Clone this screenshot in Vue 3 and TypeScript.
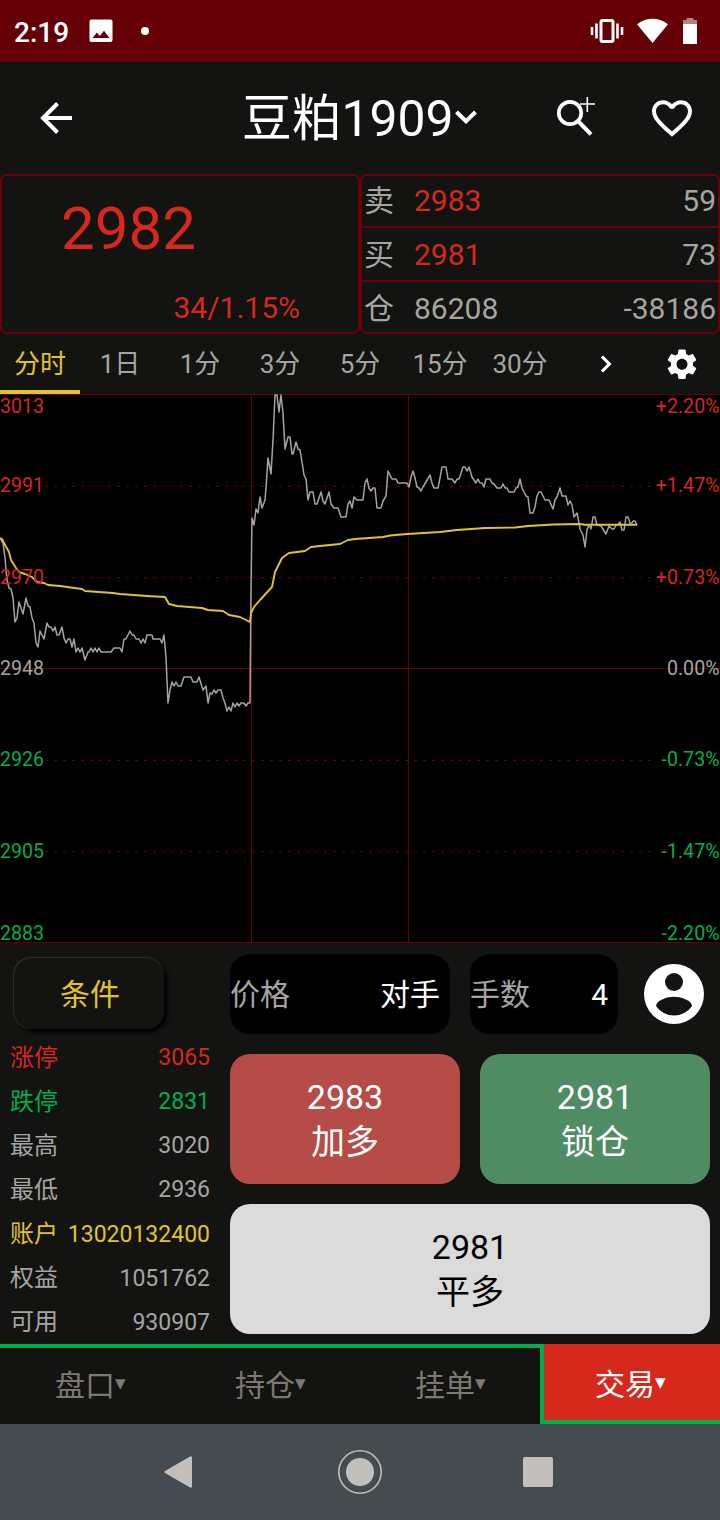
<script setup lang="ts">
type Tone = 'red' | 'green' | 'gray' | 'yellow'

interface QuoteRow { label: string; value: string; amount: string; tone: Tone }
interface InfoRow { label: string; value: string; tone: Tone }
interface AxisRow { y: number; price: string; change: string; tone: Tone }

const quoteRows: QuoteRow[] = [
  { label: '卖', value: '2983', amount: '59', tone: 'red' },
  { label: '买', value: '2981', amount: '73', tone: 'red' },
  { label: '仓', value: '86208', amount: '-38186', tone: 'gray' },
]

const periods: string[] = ['分时', '1日', '1分', '3分', '5分', '15分', '30分']

const infoRows: InfoRow[] = [
  { label: '涨停', value: '3065', tone: 'red' },
  { label: '跌停', value: '2831', tone: 'green' },
  { label: '最高', value: '3020', tone: 'gray' },
  { label: '最低', value: '2936', tone: 'gray' },
  { label: '账户', value: '13020132400', tone: 'yellow' },
  { label: '权益', value: '1051762', tone: 'gray' },
  { label: '可用', value: '930907', tone: 'gray' },
]

const sections: string[] = ['盘口', '持仓', '挂单', '交易']

const axis: AxisRow[] = [
  { y: 413, price: '3013', change: '+2.20%', tone: 'red' },
  { y: 492, price: '2991', change: '+1.47%', tone: 'red' },
  { y: 584, price: '2970', change: '+0.73%', tone: 'red' },
  { y: 675, price: '2948', change: '0.00%', tone: 'gray' },
  { y: 766, price: '2926', change: '-0.73%', tone: 'green' },
  { y: 858, price: '2905', change: '-1.47%', tone: 'green' },
  { y: 940, price: '2883', change: '-2.20%', tone: 'green' },
]

const dashedLines: number[] = [486.5, 577.5, 760.5, 851.5]

const priceLine = `
0,538 3,543 5,558 7,580 9,588 11,589 13,598 15,622 17,618 19,602 23,614 26,598 28,606 30,607 32,618 34,623
36,643 38,647 40,631 44,639 47,623 49,627 51,627 53,631 55,627 57,635 59,635 62,627 64,638 66,643 68,639
70,639 72,647 74,639 76,652 78,648 80,652 82,648 85,660 88,652 89,652 91,648 93,652 95,648 97,652 99,648
101,652 111,652 114,648 120,648 122,652 124,639 126,639 130,631 132,635 134,635 136,639 139,639 141,643
143,639 145,643 147,635 152,635 153,639 160,639 162,643 164,635 166,657 168,703 170,690 172,682 174,686
176,682 178,686 181,686 184,677 191,677 193,682 197,682 199,677 202,687 203,690 206,686 208,703 210,693
212,694 214,690 216,693 218,690 221,690 223,698 225,703 227,711 229,707 231,711 233,703 235,707 237,703
239,706 241,703 244,703 246,706 248,703 250,703 251,590 252,518 254,525 256,509 258,513 260,497 262,508
265,500 266,488 268,458 271,474 273,440 275,395 277,395 279,412 281,395 283,413 285,449 288,437 290,437
292,454 293,454 296,442 298,449 300,450 302,462 304,475 306,479 308,500 310,492 313,492 315,504 317,504
321,492 323,501 325,504 329,492 331,504 334,508 338,508 341,517 346,517 348,504 350,501 352,508 354,497
357,500 363,500 365,483 367,479 369,488 371,491 373,488 375,488 377,508 381,508 383,501 386,496 388,471
392,479 396,479 398,483 407,483 409,487 411,477 413,471 415,478 417,487 419,488 421,491 423,487 430,475
432,483 434,488 438,488 440,478 442,467 446,467 448,479 452,479 455,483 457,479 459,479 463,467 465,467
467,471 469,467 472,477 476,483 478,479 480,483 482,483 484,487 486,479 490,479 492,483 494,484 497,488
501,488 503,484 505,488 507,488 509,492 514,492 516,488 518,487 520,479 522,488 526,496 528,497 530,513
533,513 535,507 537,496 539,492 541,492 545,500 549,500 553,509 555,500 557,497 560,488 562,496 566,496
568,505 570,501 572,505 574,517 577,513 578,518 580,529 583,535 585,547 587,530 589,525 591,529 593,517
595,517 597,525 601,526 606,534 609,526 612,529 614,529 616,525 618,525 620,522 622,530 624,530 626,517
628,517 630,523 632,523 633,521 635,521 637,525`

const averageLine = `
0,538 2,539 5,545 9,552 11,560 16,568 19,572 25,574 32,577 37,582 44,583 48,585 60,586 67,587 82,589 85,591
113,593 120,594 147,596 165,597 169,604 177,606 202,608 208,610 223,611 229,615 240,617 250,622 251,613
254,607 260,600 272,587 275,572 282,558 289,553 305,551 311,547 320,546 340,544 348,540 355,539 383,537
390,535.5 407,534 440,532 457,530 485,528 515,527.5 528,526 553,524.5 580,524 585,524.7 637,524.7`
</script>

<template>
  <div class="screen">
    <div class="status">
      <span class="clock">2:19</span>
      <svg class="photo" viewBox="0 0 24 24" width="24" height="24">
        <path fill="#fff" fill-rule="evenodd" d="M2.5 0.5h19a2 2 0 0 1 2 2v18.500a2 2 0 0 1-2 2h-19a2 2 0 0 1-2-2v-18.500a2 2 0 0 1 2-2zM3.500 19h17l-5.500-7.300-4.200 5.400-3-3.600z" />
      </svg>
      <span class="dot"></span>
      <svg class="signals" viewBox="590 16 110 30" width="110" height="30">
        <rect x="601" y="20.500" width="12" height="21" rx="1.500" fill="none" stroke="#fff" stroke-width="3" />
        <path d="M592 27v8M596.500 23.500v15M617.500 23.500v15M622 27v8" stroke="#fff" stroke-width="2.600" />
        <path d="M637 24.200Q652.500 13.500 668 24.200L652.500 43z" fill="#fff" />
        <rect x="683" y="23.500" width="14" height="20.500" fill="#fff" />
        <path d="M683 24v-4h3.500v-2h7v2h3.500v4z" fill="#b5837f" />
      </svg>
    </div>

    <header class="header">
      <svg class="back" viewBox="0 0 32 32" width="32" height="32">
        <path d="M32 16H3M17.500 1.500L3 16L17.500 30.500" fill="none" stroke="#fff" stroke-width="4" />
      </svg>
      <h1 class="title">
        <span>豆粕1909</span>
        <svg viewBox="0 0 24 16" width="24" height="16">
          <path d="M2.500 2L12 11.300L21.500 2" fill="none" stroke="#fff" stroke-width="4" />
        </svg>
      </h1>
      <svg class="search" viewBox="556 96 40 42" width="40" height="42">
        <circle cx="570" cy="114" r="11.200" fill="none" stroke="#fff" stroke-width="3.700" />
        <path d="M578 122L591 135.300" stroke="#fff" stroke-width="4" />
        <path d="M580 105H595M587.300 98V113" stroke="#fff" stroke-width="1.600" />
      </svg>
      <svg class="heart" viewBox="2 3 20 18.350" width="40" height="37">
        <path fill="#fff" d="M16.500 3c-1.740 0-3.410.81-4.500 2.090C10.910 3.810 9.240 3 7.500 3 4.420 3 2 5.420 2 8.500c0 3.780 3.400 6.860 8.550 11.540L12 21.350l1.450-1.320C18.600 15.360 22 12.280 22 8.500 22 5.420 19.580 3 16.500 3zm-4.400 15.550l-.1.100-.1-.1C7.140 14.240 4 11.390 4 8.500 4 6.500 5.500 5 7.500 5c1.540 0 3.040.99 3.570 2.360h1.870C13.460 5.990 14.960 5 16.500 5c2 0 3.500 1.500 3.500 3.500 0 2.890-3.140 5.740-7.900 10.050z" />
      </svg>
    </header>

    <section class="quote">
      <div class="last">
        <span class="last-price">2982</span>
        <span class="last-change">34/1.15%</span>
      </div>
      <div class="book">
        <div v-for="row in quoteRows" :key="row.label" class="book-row">
          <span class="book-label">{{ row.label }}</span>
          <span class="book-value" :class="row.tone">{{ row.value }}</span>
          <span class="book-amount">{{ row.amount }}</span>
        </div>
      </div>
    </section>

    <nav class="periods">
      <span v-for="(p, i) in periods" :key="p" class="period" :class="{ active: i === 0 }">{{ p }}</span>
      <span class="more">
        <svg viewBox="0 0 12 18" width="12" height="18">
          <path d="M2 1.500L9.300 9L2 16.500" fill="none" stroke="#fff" stroke-width="3.200" />
        </svg>
      </span>
      <svg class="gear" viewBox="2.250 2 19.500 20" width="30" height="30.500">
        <path fill="#fff" d="M19.140 12.940c.04-.3.060-.61.060-.94 0-.32-.02-.64-.07-.94l2.030-1.580c.18-.14.23-.41.120-.61l-1.920-3.320c-.12-.22-.37-.29-.59-.22l-2.390.960c-.5-.38-1.030-.7-1.620-.94l-.36-2.540c-.04-.24-.24-.41-.48-.41h-3.840c-.24 0-.43.170-.47.410l-.36 2.540c-.59.240-1.130.570-1.620.940l-2.390-.96c-.22-.08-.47 0-.59.220L2.740 8.870c-.12.210-.08.470.120.610l2.030 1.580c-.05.300-.09.630-.09.940s.02.640.07.940l-2.030 1.580c-.18.140-.23.410-.12.610l1.920 3.320c.12.220.37.290.59.220l2.390-.96c.5.380 1.030.7 1.620.940l.36 2.540c.05.240.240.410.480.410h3.840c.24 0 .44-.17.470-.41l.36-2.540c.59-.24 1.130-.56 1.620-.94l2.390.960c.22.080.470 0 .59-.22l1.920-3.320c.12-.22.070-.47-.12-.61l-2.010-1.580zM12 15.600c-1.980 0-3.600-1.620-3.600-3.600s1.620-3.600 3.600-3.600 3.600 1.620 3.600 3.600-1.620 3.600-3.600 3.600z" />
      </svg>
    </nav>

    <svg class="chart" viewBox="0 394 720 549" width="720" height="549">
      <path class="grid" d="M0 394.500H720M0 668.500H720M0 942.500H720M251.500 394V943M408.500 394V943" />
      <path v-for="y in dashedLines" :key="y" class="grid dashed" :d="`M45 ${y}H657`" />
      <polyline class="price" :points="priceLine" />
      <polyline class="average" :points="averageLine" />
      <g v-for="a in axis" :key="a.price" class="axis" :class="a.tone">
        <text x="0" :y="a.y">{{ a.price }}</text>
        <text x="719.500" :y="a.y" text-anchor="end">{{ a.change }}</text>
      </g>
    </svg>

    <main class="trade">
      <aside class="side">
        <button class="condition">条件</button>
        <div class="info">
          <div v-for="row in infoRows" :key="row.label" class="info-row" :class="row.tone">
            <span class="info-label">{{ row.label }}</span>
            <span class="info-value">{{ row.value }}</span>
          </div>
        </div>
      </aside>
      <div class="order">
        <div class="fields">
          <div class="field price-field"><span>价格</span><b>对手</b></div>
          <div class="field lots-field"><span>手数</span><b>4</b></div>
          <svg class="avatar" viewBox="2 2 20 20" width="60" height="60">
            <circle cx="12" cy="12" r="10" fill="#fff" />
            <circle cx="12" cy="8" r="3" fill="#131311" />
            <path d="M6 15.980C6.030 13.990 10 12.900 12 12.900s5.970 1.090 6 3.080a7.200 7.200 0 0 1-12 0z" fill="#131311" />
          </svg>
        </div>
        <div class="actions">
          <button class="action buy"><span>2983</span><span>加多</span></button>
          <button class="action lock"><span>2981</span><span>锁仓</span></button>
          <button class="action close"><span>2981</span><span>平多</span></button>
        </div>
      </div>
    </main>

    <nav class="sections">
      <span v-for="(s, i) in sections" :key="s" class="section" :class="{ current: i === 3 }">{{ s }}<i class="caret">▾</i></span>
    </nav>

    <footer class="system">
      <svg viewBox="0 0 720 96" width="720" height="96" fill="#c3bfbc">
        <path d="M165 47L190 32.500Q192 31.500 192 34V62Q192 64.500 190 63.500L165 49Q163.500 48 165 47z" />
        <circle cx="360" cy="48" r="21.200" fill="none" stroke="#c3bfbc" stroke-width="1.600" />
        <circle cx="360" cy="48" r="14" />
        <rect x="523" y="33" width="30" height="30" rx="2" />
      </svg>
    </footer>
  </div>
</template>

<style>
body {
  background: #131311;
}
</style>

<style scoped>
.screen {
  display: flex;
  flex-direction: column;
  width: 720px;
  height: 1520px;
  overflow: hidden;
  background: #131311;
  color: #a5a5a3;
  font-family: Roboto, "Noto Sans CJK SC", sans-serif;
  line-height: 1;
}

button {
  border: 0;
  padding: 0;
  font: inherit;
}

.red { color: #d4291c; fill: #d4291c; }
.green { color: #00ae4d; fill: #00ae4d; }
.gray { color: #a5a5a3; fill: #a5a5a3; }
.yellow { color: #e0c42c; fill: #e0c42c; }

.status {
  display: flex;
  align-items: center;
  flex: none;
  height: 62px;
  padding: 0 20px 0 14px;
  background: #640006;
  color: #fff;
}
.clock {
  width: 75px;
  font-size: 28px;
  font-weight: 500;
  padding-top: 4px;
}
.dot {
  width: 8px;
  height: 8px;
  margin-left: 28px;
  border-radius: 50%;
  background: #fff;
}
.signals { margin-left: auto; }

.header {
  display: flex;
  align-items: center;
  flex: none;
  height: 112px;
  padding: 0 28px 0 40px;
}
.title {
  display: flex;
  align-items: center;
  margin: 4px 0 0 170px;
  color: #fff;
  font-size: 49.800px;
  font-weight: 400;
  white-space: nowrap;
}
.title svg { margin-top: -3px; }
.search { margin: -4px 0 0 78px; }
.heart { margin-left: auto; }

.quote {
  display: flex;
  flex: none;
  height: 160px;
}
.last,
.book {
  box-sizing: border-box;
  width: 360px;
  border: 2px solid #6b0009;
  border-radius: 7px;
}
.last {
  display: flex;
  flex-direction: column;
  justify-content: space-between;
  padding: 23px 58px 9px 59px;
  color: #d4291c;
}
.last-price { font-size: 60px; }
.last-change {
  align-self: flex-end;
  font-size: 30px;
}
.book {
  display: grid;
  grid-template-rows: 50px 52px 50px;
  row-gap: 2px;
  background: linear-gradient(#6b0009, #6b0009) 0 50px / 100% 2px no-repeat,
    linear-gradient(#6b0009, #6b0009) 0 104px / 100% 2px no-repeat;
}
.book-row {
  display: flex;
  align-items: center;
  padding: 0 2px;
  font-size: 30px;
}
.book-row:nth-child(2) { padding-top: 2px; }
.book-row:nth-child(3) { padding-top: 4px; }
.book-label { width: 50px; }
.book-amount { margin-left: auto; }

.periods {
  display: flex;
  align-items: center;
  flex: none;
  height: 60px;
}
.period {
  box-sizing: border-box;
  width: 80px;
  height: 60px;
  border-bottom: 4px solid transparent;
  font-size: 26px;
  line-height: 60px;
  text-align: center;
}
.period.active {
  border-color: #e0c42c;
  color: #e0c42c;
}
.more {
  display: flex;
  margin-left: 40px;
}
.gear { margin-left: 55px; }

.chart {
  display: block;
  flex: none;
  overflow: visible;
  background: #000;
}
.grid {
  fill: none;
  stroke: #640006;
  stroke-width: 1;
}
.dashed {
  stroke-dasharray: 3 6;
}
.price,
.average {
  fill: none;
  stroke-width: 1.500;
  stroke-linejoin: round;
}
.price { stroke: #a5a5a3; }
.average { stroke: #e0c42c; stroke-width: 1.900; }
.axis { font-size: 19.600px; }

.trade {
  display: flex;
  flex: none;
  height: 401px;
}
.side {
  display: flex;
  flex-direction: column;
  width: 230px;
}
.condition {
  width: 150px;
  height: 71px;
  margin: 15px 0 6px 14px;
  padding: 3px 0 0 2px;
  border-radius: 18px;
  background: #131311;
  color: #e0c42c;
  font-size: 30px;
  box-shadow: -0.500px -0.500px 1px #30302e, 3px 3px 4px #000;
}
.info {
  display: grid;
  flex: 1;
  grid-template-rows: repeat(7, 1fr);
  padding: 0 20px 0 10px;
}
.info-row {
  display: flex;
  align-items: center;
  justify-content: space-between;
}
.info-label {
  padding-top: 1px;
  font-size: 24px;
}
.info-value {
  padding-top: 1px;
  font-size: 23px;
}

.order {
  display: flex;
  flex-direction: column;
  gap: 20px;
  width: 480px;
  padding-top: 11px;
}
.fields {
  display: flex;
  align-items: center;
  gap: 20px;
}
.field {
  box-sizing: border-box;
  display: flex;
  align-items: center;
  justify-content: space-between;
  height: 80px;
  padding: 2px 10px 0 0;
  border-radius: 20px;
  background: #000;
  font-size: 30px;
}
.field b {
  color: #fff;
  font-weight: 400;
}
.price-field { width: 220px; }
.lots-field { width: 148px; }
.avatar { margin-left: 6px; }

.actions {
  display: grid;
  grid-template-columns: 230px 230px;
  grid-auto-rows: 130px;
  gap: 20px;
}
.action {
  display: flex;
  flex-direction: column;
  align-items: center;
  justify-content: center;
  padding-top: 2px;
  border-radius: 20px;
  color: #fff;
  font-size: 34px;
  line-height: 45px;
}
.buy { background: #b54c47; }
.lock { background: #4f8c64; }
.close {
  grid-column: 1 / 3;
  background: #dbdbdb;
  color: #000;
}

.sections {
  display: grid;
  flex: none;
  grid-template-columns: repeat(4, 1fr);
  height: 80px;
}
.section {
  box-sizing: border-box;
  display: flex;
  align-items: center;
  justify-content: center;
  border-top: 4px solid #00ae4d;
  color: #7d7971;
  font-size: 30px;
}
.section.current {
  padding: 6px 4px 0 0;
  border-top: 0;
  border-left: 4px solid #00ae4d;
  border-bottom: 4px solid #00ae4d;
  background: #d4291c;
  color: #fff;
}
.caret {
  width: 10px;
  padding-bottom: 5px;
  font-family: "DejaVu Sans", sans-serif;
  font-size: 21px;
  font-style: normal;
}

.system {
  flex: none;
  height: 96px;
  background: #444c4f;
}
.system svg { display: block; }
</style>
